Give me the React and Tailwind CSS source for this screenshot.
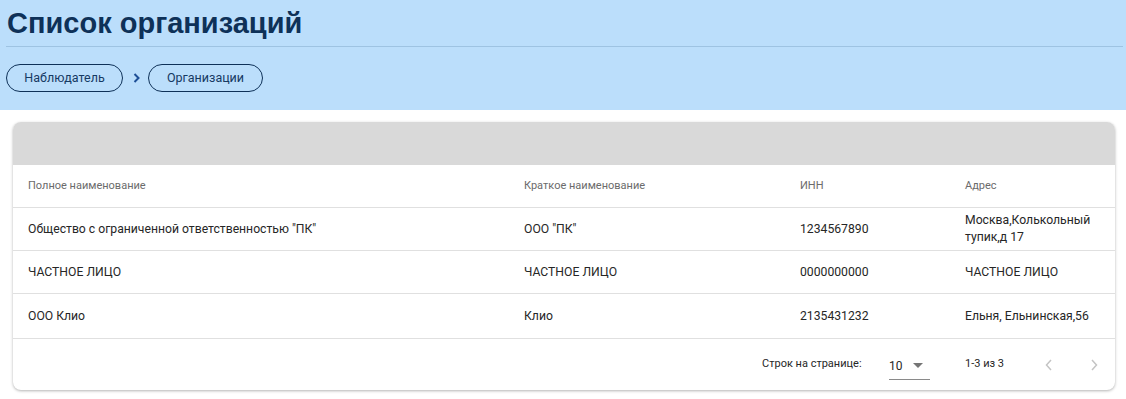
import React from "react";

const rows = [
  ["Общество с ограниченной ответственностью \"ПК\"", "ООО \"ПК\"", "1234567890", "Москва,Колькольный тупик,д 17", "h-[43px]"],
  ["ЧАСТНОЕ ЛИЦО", "ЧАСТНОЕ ЛИЦО", "0000000000", "ЧАСТНОЕ ЛИЦО", "h-[43px]"],
  ["ООО Клио", "Клио", "2135431232", "Ельня, Ельнинская,56", "h-[45px]"],
];

const cols = "grid grid-cols-[496px_276px_165px_165px]";

export default function App() {
  return (
    <div className="w-[1126px] h-[399px] bg-white font-['Roboto',sans-serif] overflow-hidden">
      <div className="h-[110px] bg-[#bbdefb] pt-[6px] px-[6px]">
        <h1 className="text-[29px] leading-[34px] font-bold text-[#0e3158] pl-px font-['Liberation_Sans',Arial,sans-serif]">
          Список организаций
        </h1>
        <div className="mt-[6px] h-px bg-[#9ec3e2] w-[1117px]" />
        <div className="mt-[17px] flex items-center">
          <div className="h-[28px] w-[117px] rounded-full border border-[#0e3158] flex items-center justify-center text-[12.5px] text-[#163a63]">
            Наблюдатель
          </div>
          <svg width="10" height="12" viewBox="0 0 10 12" className="ml-[9px] mr-[6px]">
            <path d="M2.5 2 L6.5 6 L2.5 10" fill="none" stroke="#1d4f96" strokeWidth="2" />
          </svg>
          <div className="h-[28px] w-[115px] rounded-full border border-[#0e3158] flex items-center justify-center text-[12.5px] text-[#163a63]">
            Организации
          </div>
        </div>
      </div>
      <div className="ml-[13px] mt-[12px] w-[1102px] rounded-[8px] bg-white shadow-[0_1px_3px_rgba(0,0,0,0.3)] overflow-hidden">
        <div className="h-[43px] bg-[#d9d9d9]" />
        <div className={`${cols} h-[43px] items-center border-b border-[#e0e0e0] text-[11px] text-[#6b6b6b]`}>
          <div className="pl-[15px]">Полное наименование</div>
          <div className="pl-[15px]">Краткое наименование</div>
          <div className="pl-[15px]">ИНН</div>
          <div className="pl-[15px]">Адрес</div>
        </div>
        {rows.map((r, i) => (
          <div key={i} className={`${cols} ${r[4]} items-center border-b border-[#e0e0e0] text-[12.2px] text-[#262626]`}>
            <div className="pl-[15px]">{r[0]}</div>
            <div className="pl-[15px]">{r[1]}</div>
            <div className="pl-[15px]">{r[2]}</div>
            <div className="pl-[15px] pr-[15px] leading-[17px]">{r[3]}</div>
          </div>
        ))}
        <div className="h-[51px] flex items-center text-[11px] text-[#262626]">
          <div className="ml-[749px] w-[127px]">Строк на странице:</div>
          <div className="w-[41px] h-[26px] border-b border-[#8a8a8a] flex items-center mt-[4px]">
            <span className="text-[12px]">10</span>
            <svg width="10" height="6" viewBox="0 0 10 6" className="ml-[10px]">
              <path d="M0 0 L10 0 L5 5 Z" fill="#757575" />
            </svg>
          </div>
          <div className="ml-[35px] w-[70px]">1-3 из 3</div>
          <svg width="10" height="14" viewBox="0 0 10 14" className="ml-[9px]">
            <path d="M7 2 L2.5 7 L7 12" fill="none" stroke="#c4c4c4" strokeWidth="1.5" />
          </svg>
          <svg width="10" height="14" viewBox="0 0 10 14" className="ml-[35px]">
            <path d="M3 2 L7.5 7 L3 12" fill="none" stroke="#c4c4c4" strokeWidth="1.5" />
          </svg>
        </div>
      </div>
    </div>
  );
}
